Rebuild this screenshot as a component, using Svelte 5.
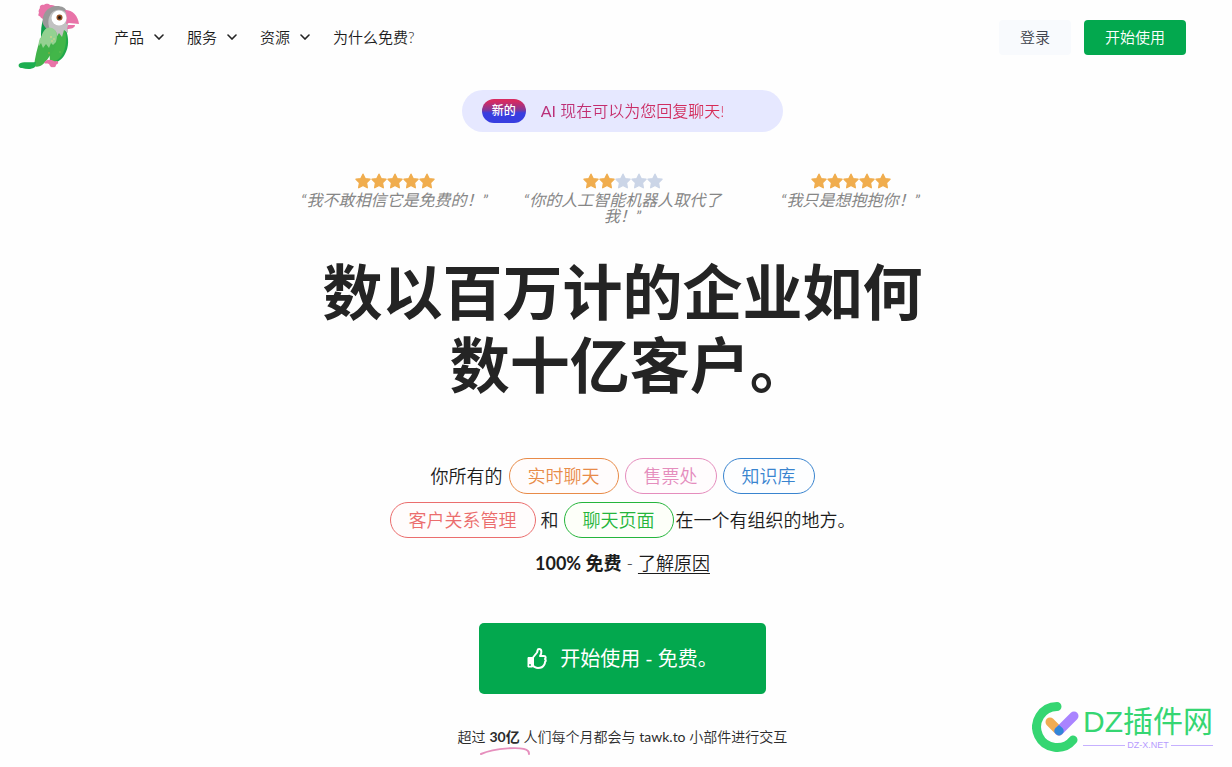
<script>
  const menus = ['产品', '服务', '资源'];
  const reviews = [
    { stars: 5, text: '“我不敢相信它是免费的！”' },
    { stars: 2, text: '“你的人工智能机器人取代了我！”' },
    { stars: 5, text: '“我只是想抱抱你！”' }
  ];
</script>

<header>
  <a class="logo" href="#home" aria-label="tawk.to">
    <svg viewBox="0 -1 62 68" width="62" height="68" aria-hidden="true">
      <path d="M26 1c2-2 5-1 6 0 2 0 4 0 6 2L25 15c-2-1-3-2-3-3-2 1-2-2-1-3-1-2 0-4 1-5-1-2 2-4 4-3z" fill="#e873a8" />
      <path d="M25 16c-2 6-2 11-2 17l8-7z" fill="#0f9d4c" />
      <path d="M31 24c8 0 14 0 17 2 3 8 3 17-1 24-3 6-9 10-15 9z" fill="#21a94b" />
      <path d="M31 23c8 1 14 2 16 4 2 8 1 17-3 24-3 5-8 7-12 7z" fill="#42b649" />
      <path d="M25 20c-2-10 5-18 14-18 5 0 9 2 10 6l-6 15-12 5-4-5z" fill="#999" />
      <path d="M31 23c-2-8 1-16 8-17 7-1 11 3 11 9v14l-4-3-2 7-3-4-3 5-3-6c-2 0-4-2-4-5z" fill="#c2c2c2" />
      <path d="M47 6c8 0 13 6 14 14l-10-1-3 1c1-5 1-9-1-14z" fill="#e873a8" />
      <path d="M50 21h7c0 3-4 4-8 4z" fill="#e873a8" />
      <circle cx="41" cy="14" r="7.500" fill="#fff" />
      <circle cx="41.500" cy="13.500" r="3" fill="#945022" />
      <circle cx="41.500" cy="13.500" r="1.500" fill="#241b18" />
      <path d="M22 36c3-9 8-13 13-11 6 3 5 14 0 22-4 6-7 11-11 14-3 2-6 2-8 1 1-9 3-17 6-26z" fill="#41b34a" />
      <path d="M23 34c2-8 6-12 11-10 5 2 6 7 4 14l-3 3-2-2-2 5-3-4-3 4-2-5-2 3c-1-2 0-5 1-8z" fill="#94d191" />
      <path d="M1 60c4-3 10-1 17-2l-1 5c-4 3-9 2-13 1-3 0-4-2-3-4z" fill="#1cae50" />
      <path d="M26 59c2-4 6-4 10-2 2 1 3-1 4 1s-2 2-2 3-1 3-3 2c-2 1-3-1-4-3-2-1-3 0-5-1z" fill="#e873a8" />
      <circle cx="33" cy="33" r=".8" fill="#f4d58a" /><circle cx="34" cy="37" r=".7" fill="#f4d58a" /><circle cx="36" cy="35" r=".7" fill="#f4d58a" />
      <circle cx="31" cy="49" r=".7" fill="#c3a43a" /><circle cx="42" cy="48" r=".7" fill="#75c65a" />
    </svg>
  </a>
  <nav>
    {#each menus as menu}
      <button class="menu" type="button">
        {menu}
        <svg viewBox="0 0 10 6" width="10" height="6" aria-hidden="true"><path d="M1 1l4 4 4-4" fill="none" stroke="#242424" stroke-width="1.600" stroke-linecap="round" /></svg>
      </button>
    {/each}
    <a href="#why">为什么免费?</a>
  </nav>
  <div class="account">
    <a class="login" href="#login">登录</a>
    <a class="signup" href="#signup">开始使用</a>
  </div>
</header>

<main>
  <a class="banner" href="#ai"><span class="badge">新的</span><span class="news"><span class="latin">AI</span> 现在可以为您回复聊天!</span></a>

  <section class="reviews">
    {#each reviews as review}
      <div class="review">
        <div class="stars">
          {#each Array(5) as _, i}
            <svg viewBox="0 0 16 16" width="16" height="16" aria-hidden="true"><path d="M8 1.200l2.100 4.400 4.900.7-3.500 3.500.8 4.900L8 12.400l-4.300 2.300.8-4.900L1 6.300l4.900-.7z" fill={i < review.stars ? '#f0ad4e' : '#cbd5e7'} stroke={i < review.stars ? '#f0ad4e' : '#cbd5e7'} stroke-width="1.400" stroke-linejoin="round" /></svg>
          {/each}
        </div>
        <p>{review.text}</p>
      </div>
    {/each}
  </section>

  <h1>数以百万计的企业如何<br />&nbsp;数十亿客户。</h1>

  <div class="pitch">
    <div class="line"><span>你所有的</span><a class="pill orange" href="#chat">实时聊天</a><a class="pill pink" href="#tickets">售票处</a><a class="pill blue" href="#knowledge">知识库</a></div>
    <div class="line tight"><a class="pill red" href="#crm">客户关系管理</a><span>和</span><a class="pill green" href="#pages">聊天页面</a><span class="ending">在一个有组织的地方。</span></div>
    <p><strong>100% 免费</strong> - <a href="#why">了解原因</a></p>
  </div>

  <a class="cta" href="#signup">
    <svg viewBox="0 0 20 21" width="20" height="21" aria-hidden="true">
      <path d="M6 9.500l4-5c1-2 0-3.500 2-3.500 3 0 3 4 1 7h4c2 0 2 2 1 3 1 1 1 2 0 3 0 1 0 2-1 3-1 2-3 3-6 3-2 0-3-1-5-2z" fill="none" stroke="#fff" stroke-width="2" stroke-linejoin="round" />
      <path d="M1 9.500h4.500V19H1z" fill="#fff" stroke="#fff" stroke-linejoin="round" /><circle cx="3" cy="17" r=".9" fill="#03a84e" />
    </svg>
    <span>开始使用 - 免费。</span>
  </a>

  <p class="usage">超过 <strong>30亿<svg viewBox="0 0 50 9" width="50" height="9" aria-hidden="true"><path d="M1 7C14 1 44-1 48 4c1 1 1 2 1 3" fill="none" stroke="#e68fbd" stroke-width="2" stroke-linecap="round" /></svg></strong> 人们每个月都会与 <span class="latin">tawk.to</span> 小部件进行交互</p>
</main>

<aside>
  <svg viewBox="0 0 50 52" width="50" height="52" aria-hidden="true">
    <path d="M25 5.500A20.500 20.500 0 1 0 41 39" fill="none" stroke="#35d672" stroke-width="9" stroke-linecap="round" />
    <path d="M18 21l9 9" stroke="#f0ac52" stroke-width="9" stroke-linecap="round" />
    <path d="M27 30l15-15" stroke="#a984ff" stroke-width="9" stroke-linecap="round" />
    <path d="M27 24l3.500 3a4.500 4.500 0 1 1-7 0z" fill="#3186d8" />
  </svg>
  <div class="mark"><span class="name">DZ插件网</span><span class="site">DZ-X.NET</span></div>
</aside>

<style>
  :global(body) { margin: 0; background: #fefefe; color: #1c1c1c; font-family: Lato, "Noto Sans CJK SC", sans-serif; font-weight: 350; }
  a { color: inherit; text-decoration: none; }
  p, h1 { margin: 0; }
  svg { display: block; flex: none; }
  .latin { font-weight: 400; }
  header { display: flex; align-items: center; height: 74px; padding: 0 46px 0 18px; font-size: 15px; line-height: 20px; }
  .logo { margin-right: 34px; }
  nav { display: flex; gap: 23px; }
  .menu { display: flex; align-items: center; gap: 10px; padding: 0; border: 0; background: none; color: inherit; font: inherit; }
  .account { display: flex; gap: 13px; margin-left: auto; }
  .account a { padding: 0 21px; border-radius: 4px; line-height: 35px; }
  .login { background: #f8fafd; color: #3f444d; }
  .signup { background: #03a84e; color: #fff; }
  main { display: flex; flex-direction: column; align-items: center; padding: 16px 0 18px 13px; }
  .banner { display: flex; align-items: center; gap: 15px; height: 42px; padding: 0 59px 0 20px; border-radius: 21px; background: #e6e8ff; font-size: 16px; line-height: 24px; }
  .badge { padding: 0 10px; border-radius: 12px; background: linear-gradient(#d62b61 10%, #853795 45%, #383ee0 58%); color: #fff; font-size: 12px; font-weight: 500; }
  .news { background: linear-gradient(90deg, #b92f7a, #d92b54); background-clip: text; color: transparent; }
  .reviews { display: grid; grid-template-columns: repeat(3, 228px); margin-top: 41px; }
  .review { padding: 0 12px; text-align: center; color: #868686; font-size: 16px; font-style: italic; font-weight: 400; line-height: 16px; }
  .stars { display: flex; justify-content: center; margin-bottom: 3px; }
  h1 { margin-top: 32px; color: #242424; font-size: 60px; font-weight: 700; line-height: 73px; text-align: center; }
  .pitch { display: flex; flex-direction: column; align-items: center; gap: 8px; margin-top: 56px; font-size: 18px; line-height: 34px; }
  .line { display: flex; align-items: center; gap: 6px; }
  .tight { gap: 5px; }
  .ending { margin-left: -3px; }
  .pill { padding: 0 18px; border: 1px solid; border-radius: 18px; }
  .orange { color: #e88b48; background: #fffcfc; }
  .pink { color: #e58dbd; background: #fffcfd; }
  .blue { color: #3984cf; background: #fdfeff; }
  .red { color: #eb6d6d; background: #fffcfc; }
  .green { color: #25b53b; background: #fdfff9; }
  strong { font-weight: 700; }
  .pitch p a { text-decoration: underline; text-underline-offset: 3px; text-decoration-thickness: 1px; }
  .cta { display: flex; align-items: center; gap: 13px; margin-top: 43px; padding: 0 48px; border-radius: 5px; background: #03a84e; color: #fff; font-size: 20px; font-weight: 400; line-height: 71px; }
  .usage { margin-top: 32px; color: #2c2c2c; font-size: 14px; line-height: 22px; }
  .usage strong { position: relative; }
  .usage svg { position: absolute; top: 19px; left: -9px; }
  aside { position: absolute; right: 19px; bottom: 14px; display: flex; align-items: center; gap: 1px; pointer-events: none; }
  .mark { display: flex; flex-direction: column; font-family: "Liberation Sans", "Noto Sans CJK SC", sans-serif; font-weight: 400; }
  .name { color: #35d672; font-size: 30px; line-height: 36px; }
  .site { display: flex; align-items: center; gap: 2px; color: #b69bff; font-size: 9px; line-height: 10px; }
  .site::before, .site::after { content: ""; flex: 1; height: 1px; background: #c6b0ff; }
</style>
